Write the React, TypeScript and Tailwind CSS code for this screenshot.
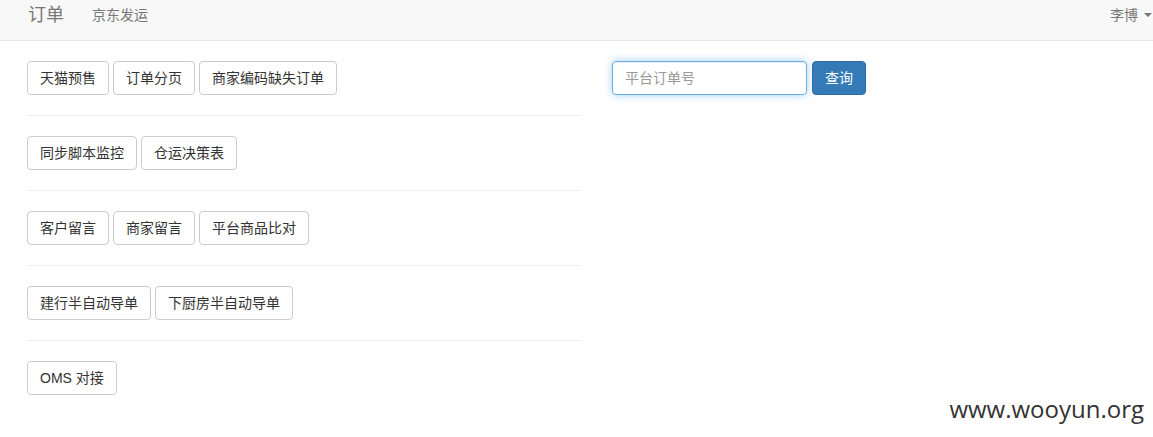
import React from 'react';

const rows: string[][] = [
    ['天猫预售', '订单分页', '商家编码缺失订单'],
    ['同步脚本监控', '仓运决策表'],
    ['客户留言', '商家留言', '平台商品比对'],
    ['建行半自动导单', '下厨房半自动导单'],
    ['OMS 对接'],
];

const font = { fontFamily: '"Liberation Sans", "Noto Sans CJK SC", sans-serif' };

const App: React.FC = () => {
    return (
        <div className="relative min-h-screen w-full bg-white text-[14px] text-[#333]" style={font}>
            <div className="flex h-[41px] items-center border-b border-[#e7e7e7] bg-[#f8f8f8] pb-[10px]">
                <span className="ml-[28px] text-[18px] leading-[20px] text-[#777]">订单</span>
                <span className="ml-[28px] text-[14px] leading-[20px] text-[#777]">京东发运</span>
                <span className="ml-auto mr-[1px] flex items-center text-[14px] leading-[20px] text-[#777]">
                    李博
                    <span className="ml-[6px] inline-block h-0 w-0 border-x-[4px] border-t-[4px] border-x-transparent border-t-[#777]"></span>
                </span>
            </div>
            <div className="flex pl-[27px] pt-[20px]">
                <div className="w-[555px]">
                    {rows.map((row, i) => (
                        <div key={i}>
                            <div className="flex gap-[4px]">
                                {row.map((label) => (
                                    <button
                                        key={label}
                                        className="h-[34px] rounded-[4px] border border-[#ccc] bg-white px-[12px] text-[14px] leading-[20px] text-[#333]"
                                    >
                                        {label}
                                    </button>
                                ))}
                            </div>
                            {i < rows.length - 1 && <div className="my-[20px] border-t border-[#eee]"></div>}
                        </div>
                    ))}
                </div>
                <div className="ml-[30px] flex items-start gap-[5px]">
                    <input
                        className="h-[34px] w-[195px] rounded-[4px] border border-[#66afe9] px-[12px] text-[14px] text-[#555] shadow-[inset_0_1px_1px_rgba(0,0,0,0.075),0_0_8px_rgba(102,175,233,0.6)] outline-none placeholder:text-[#999]"
                        placeholder="平台订单号"
                    />
                    <button className="h-[34px] rounded-[4px] border border-[#2e6da4] bg-[#337ab7] px-[12px] text-[14px] text-white">
                        查询
                    </button>
                </div>
            </div>
            <div
                className="absolute right-[9px] top-[391px] text-[24px] text-[#333]"
                style={{ fontFamily: '"Open Sans", sans-serif' }}
            >
                www.wooyun.org
            </div>
        </div>
    );
};

export default App;
